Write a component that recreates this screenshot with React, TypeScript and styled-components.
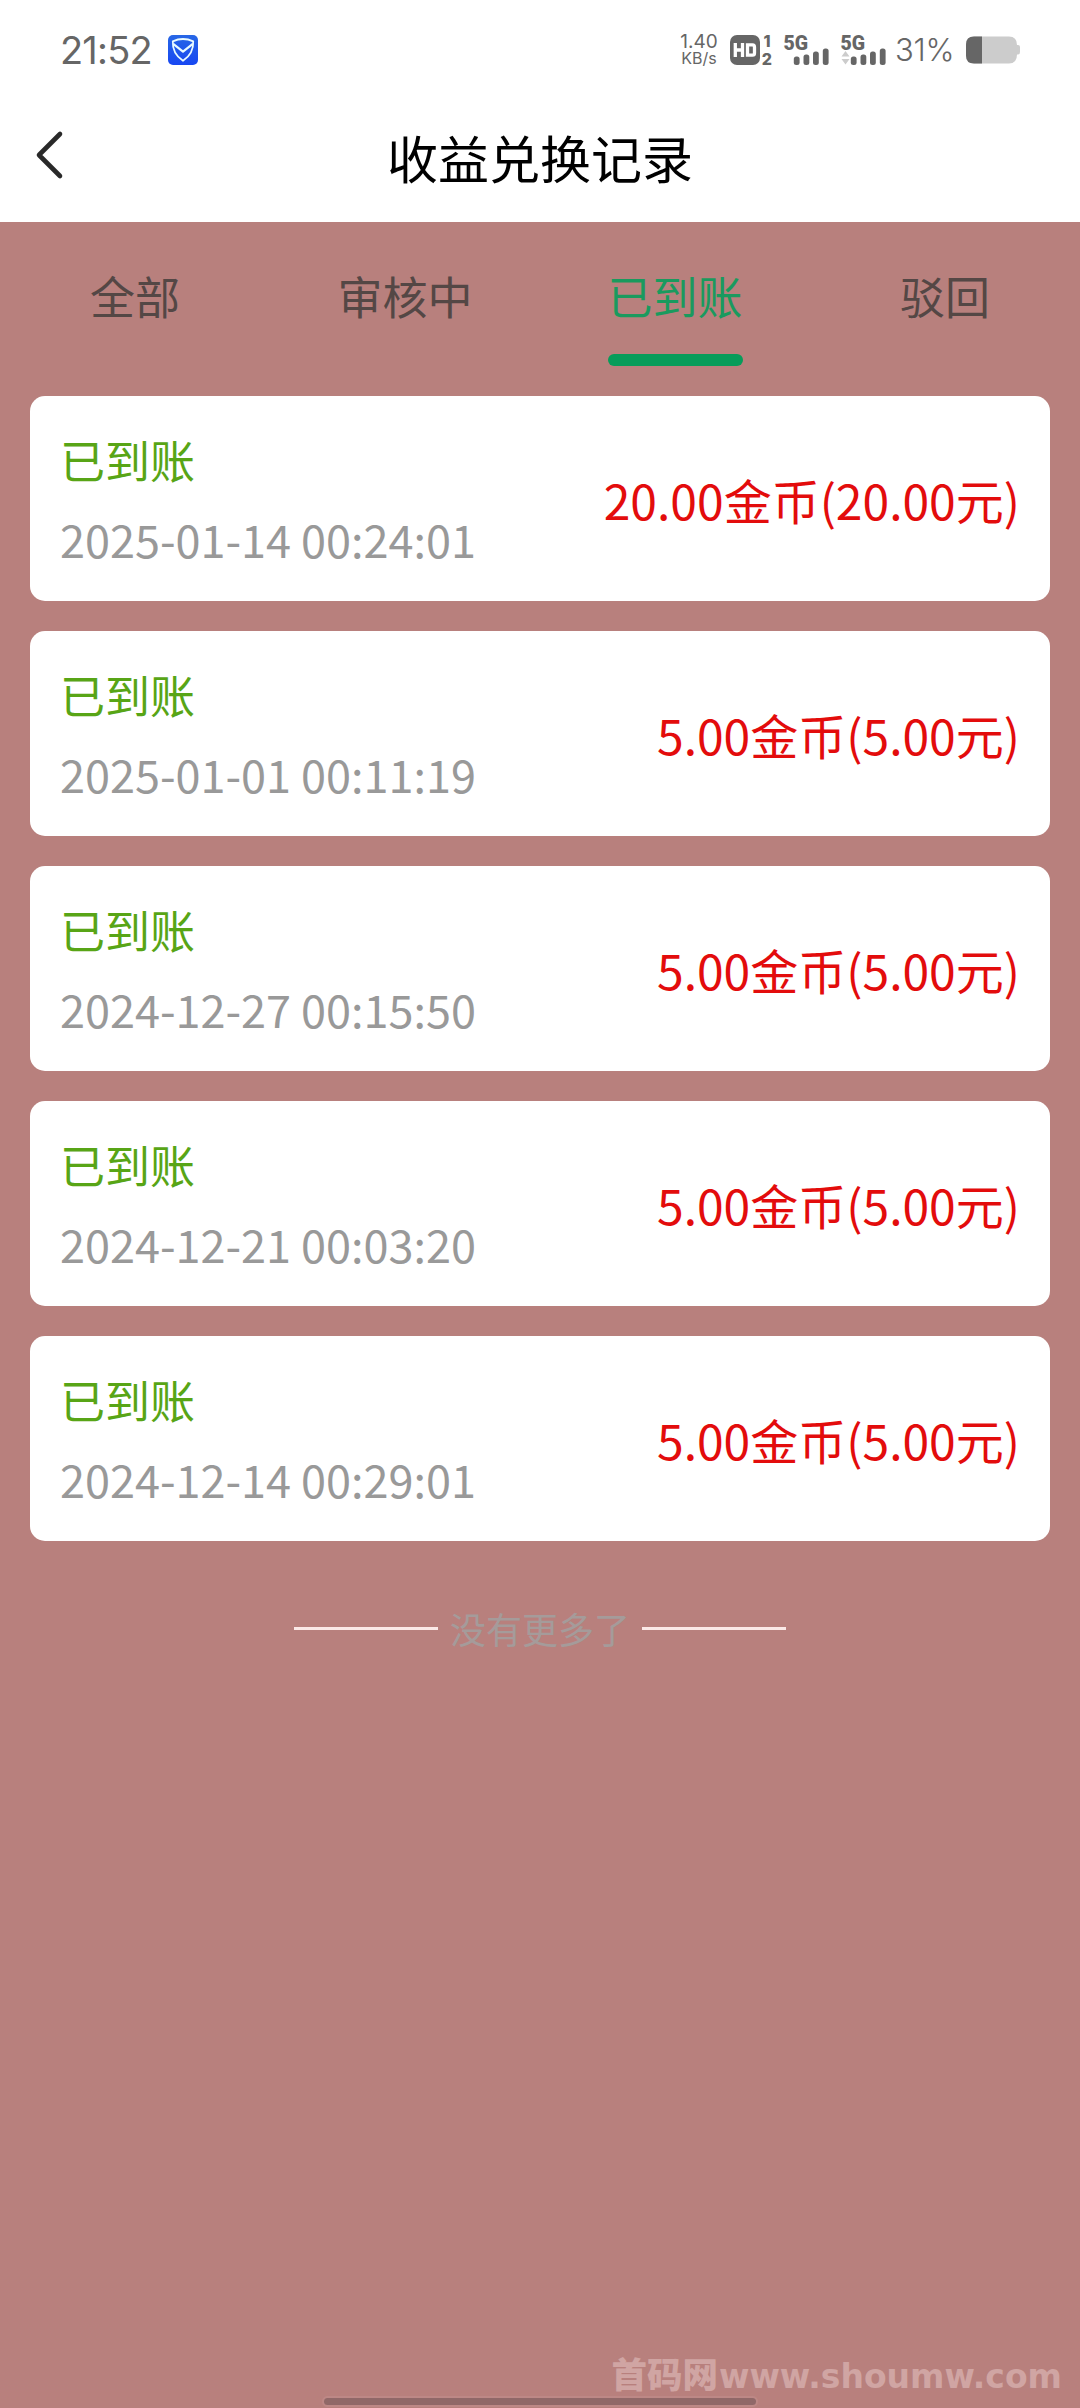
import React from "react";
import styled, { createGlobalStyle } from "styled-components";

const Global = createGlobalStyle`
  * { box-sizing: border-box; }
  body { margin: 0; background: #b8807d; }
`;

const Page = styled.div`
  display: flex;
  flex-direction: column;
  width: 1080px;
  height: 2408px;
  background: #b8807d;
  font-family: "Noto Sans CJK SC", sans-serif;
  overflow: hidden;
`;

const StatusBar = styled.div`
  display: flex;
  align-items: center;
  justify-content: space-between;
  height: 88px;
  padding: 12px 60px 0 60px;
  background: #fff;
  color: #666;
  font-family: Inter, sans-serif;
`;

const StatusGroup = styled.div`
  display: flex;
  align-items: center;
`;

const Clock = styled.span`
  width: 108px;
  font-size: 38px;
  line-height: 46px;
  letter-spacing: -0.8px;
  white-space: nowrap;
`;

const Speed = styled.div`
  display: flex;
  flex-direction: column;
  align-items: center;
  width: 40px;
  margin-right: 9px;
  white-space: nowrap;
`;

const SpeedLine = styled.span<{ $size: number }>`
  font-size: ${(p) => p.$size}px;
  line-height: 17px;
`;

const Glyph = styled.svg<{ $gap?: number }>`
  display: block;
  flex: none;
  margin-right: ${(p) => p.$gap ?? 0}px;
`;

const Percent = styled.span`
  width: 71px;
  font-size: 31px;
  font-weight: 300;
  line-height: 38px;
  letter-spacing: -0.3px;
  white-space: nowrap;
`;

const NavBar = styled.header`
  display: grid;
  grid-template-columns: 120px 1fr 120px;
  align-items: center;
  height: 134px;
  background: #fff;
`;

const BackButton = styled.button`
  display: flex;
  align-items: center;
  height: 100%;
  padding: 0 0 0 34px;
  border: 0;
  background: none;
`;

const Title = styled.h1`
  margin: 0;
  padding-top: 4px;
  color: #000;
  font-size: 51px;
  font-weight: 400;
  line-height: 74px;
  text-align: center;
`;

const Tabs = styled.nav`
  display: grid;
  grid-template-columns: repeat(4, 1fr);
  height: 144px;
`;

const Tab = styled.button<{ $active: boolean }>`
  display: flex;
  flex-direction: column;
  align-items: center;
  justify-content: space-between;
  padding: 41px 0 0;
  border: 0;
  background: none;
  font: 400 45px/65px "Noto Sans CJK SC", sans-serif;
  color: ${(p) => (p.$active ? "#1a9a5e" : "#544745")};
`;

const Indicator = styled.span`
  width: 135px;
  height: 12px;
  border-radius: 6px;
  background: #079c5a;
`;

const List = styled.main`
  display: flex;
  flex-direction: column;
  gap: 30px;
  padding: 30px 30px 0;
`;

const Card = styled.article`
  display: flex;
  align-items: center;
  justify-content: space-between;
  height: 205px;
  padding: 0 30px;
  border-radius: 15px;
  background: #fff;
`;

const Info = styled.div`
  display: flex;
  flex-direction: column;
  gap: 14px;
  padding-top: 1px;
  font-size: 45px;
  line-height: 65px;
`;

const State = styled.span`
  color: #58a516;
`;

const Time = styled.time`
  color: #999;
`;

const Amount = styled.span`
  padding-top: 1px;
  color: #e30c0c;
  font-size: 48px;
  line-height: 70px;
`;

const NoMore = styled.div`
  display: flex;
  align-items: center;
  justify-content: center;
  gap: 12px;
  height: 52px;
  margin-top: 61px;
  color: #a59b9a;
  font-size: 36px;
  line-height: 52px;
`;

const Rule = styled.span`
  width: 144px;
  height: 3px;
  background: #fbe9e7;
`;

const Bottom = styled.footer`
  display: flex;
  flex-direction: column;
  margin-top: auto;
`;

const Watermark = styled.div`
  display: flex;
  align-items: baseline;
  justify-content: flex-end;
  height: 46px;
  padding-right: 18px;
  color: #d0a5a3;
  font-weight: 900;
  font-size: 35.5px;
  line-height: 48px;
  white-space: nowrap;
`;

const Domain = styled.span`
  margin-left: 1px;
  font: 700 33px/48px "DejaVu Sans", sans-serif;
`;

const HomeBar = styled.div`
  align-self: center;
  width: 432px;
  height: 7px;
  margin: 3px 0;
  border-radius: 4px;
  background: #906868;
  box-shadow: 0 0 0 2px #bd8886;
`;

const records = [
  { time: "2025-01-14 00:24:01", value: "20.00" },
  { time: "2025-01-01 00:11:19", value: "5.00" },
  { time: "2024-12-27 00:15:50", value: "5.00" },
  { time: "2024-12-21 00:03:20", value: "5.00" },
  { time: "2024-12-14 00:29:01", value: "5.00" },
];

const tabs = ["全部", "审核中", "已到账", "驳回"];

const Shield = () => (
  <Glyph width="30" height="30" viewBox="0 0 30 30">
    <defs>
      <linearGradient id="shield" x1="0" y1="0" x2="0" y2="1">
        <stop offset="0" stopColor="#2767e6" />
        <stop offset="1" stopColor="#1747f2" />
      </linearGradient>
    </defs>
    <rect width="30" height="30" rx="5" fill="url(#shield)" />
    <g fill="none" stroke="#e9fbff" strokeWidth="1.8" strokeLinejoin="round">
      <path d="M4.800 6.400Q15 1.600 25.200 6.400C25.600 15 21.600 21.500 15 25.800C8.400 21.500 4.400 15 4.800 6.400Z" />
      <path d="M5.200 8.800L15 16.600L24.800 8.800" strokeWidth="2.200" />
    </g>
  </Glyph>
);

const Hd = () => (
  <Glyph width="49" height="44" viewBox="-2 -6 49 44" $gap={5}>
    <rect y="1" width="30" height="30" rx="7" fill="#666" />
    <g fill="none" stroke="#fff" strokeWidth="3.300">
      <path d="M5.300 9V23M12.500 9V23M5.300 16H12.500" />
      <path d="M17.500 10.800H22.500Q24.500 10.800 24.500 13V19Q24.500 21.200 22.500 21.200H17.500Z" />
    </g>
    <g fill="#666" fontFamily="Inter, sans-serif" fontWeight="800" fontSize="16">
      <text x="33.500" y="12.500">1</text>
      <text x="31.800" y="30.500">2</text>
    </g>
  </Glyph>
);

const Signal = ({ arrows = false, gap = 0 }: { arrows?: boolean; gap?: number }) => (
  <Glyph width="49" height="44" viewBox="-2 -6 49 44" $gap={gap}>
    <text x="-0.500" y="15.500" fill="#666" fontFamily="Roboto, sans-serif" fontWeight="900" fontSize="19.500">
      5G
    </text>
    {arrows && <path d="M0.500 22.500L4.500 17L8.500 22.500ZM0.500 25L4.500 30.500L8.500 25Z" fill="#ccc" />}
    <g fill="#666">
      <rect x="9.800" y="22.500" width="5.800" height="8.500" rx="2.500" />
      <rect x="19.500" y="20.500" width="5.800" height="10.500" rx="2.500" />
      <rect x="29" y="17.500" width="5.800" height="13.500" rx="2.500" />
      <rect x="38.800" y="14.500" width="5.800" height="16.500" rx="2.500" />
    </g>
  </Glyph>
);

const Battery = () => (
  <Glyph width="54" height="28" viewBox="0 0 54 28">
    <path d="M8 .5H43Q51 .5 51 9H52Q54 9 54 11V16Q54 18.500 52 18.500H51Q51 27.500 43 27.500H8Q0 27.500 0 19.500V8.500Q0 .5 8 .5Z" fill="#ccc" />
    <path d="M8 .5H16V27.500H8Q0 27.500 0 19.500V8.500Q0 .5 8 .5Z" fill="#666" />
  </Glyph>
);

export default function App() {
  return (
    <>
      <Global />
      <Page>
        <StatusBar>
          <StatusGroup>
            <Clock>21:52</Clock>
            <Shield />
          </StatusGroup>
          <StatusGroup>
            <Speed>
              <SpeedLine $size={19}>1.40</SpeedLine>
              <SpeedLine $size={16}>KB/s</SpeedLine>
            </Speed>
            <Hd />
            <Signal gap={8} />
            <Signal arrows gap={7} />
            <Percent>31%</Percent>
            <Battery />
          </StatusGroup>
        </StatusBar>
        <NavBar>
          <BackButton aria-label="返回">
            <Glyph width="32" height="50" viewBox="0 0 32 50">
              <path d="M26 4L5 25L26 46" fill="none" stroke="#292929" strokeWidth="4.600" strokeLinecap="round" strokeLinejoin="round" />
            </Glyph>
          </BackButton>
          <Title>收益兑换记录</Title>
        </NavBar>
        <Tabs>
          {tabs.map((name, i) => (
            <Tab key={name} $active={i === 2}>
              {name}
              {i === 2 && <Indicator />}
            </Tab>
          ))}
        </Tabs>
        <List>
          {records.map((r) => (
            <Card key={r.time}>
              <Info>
                <State>已到账</State>
                <Time>{r.time}</Time>
              </Info>
              <Amount>
                {r.value}金币({r.value}元)
              </Amount>
            </Card>
          ))}
        </List>
        <NoMore>
          <Rule />
          没有更多了
          <Rule />
        </NoMore>
        <Bottom>
          <Watermark>
            首码网<Domain>www.shoumw.com</Domain>
          </Watermark>
          <HomeBar />
        </Bottom>
      </Page>
    </>
  );
}
